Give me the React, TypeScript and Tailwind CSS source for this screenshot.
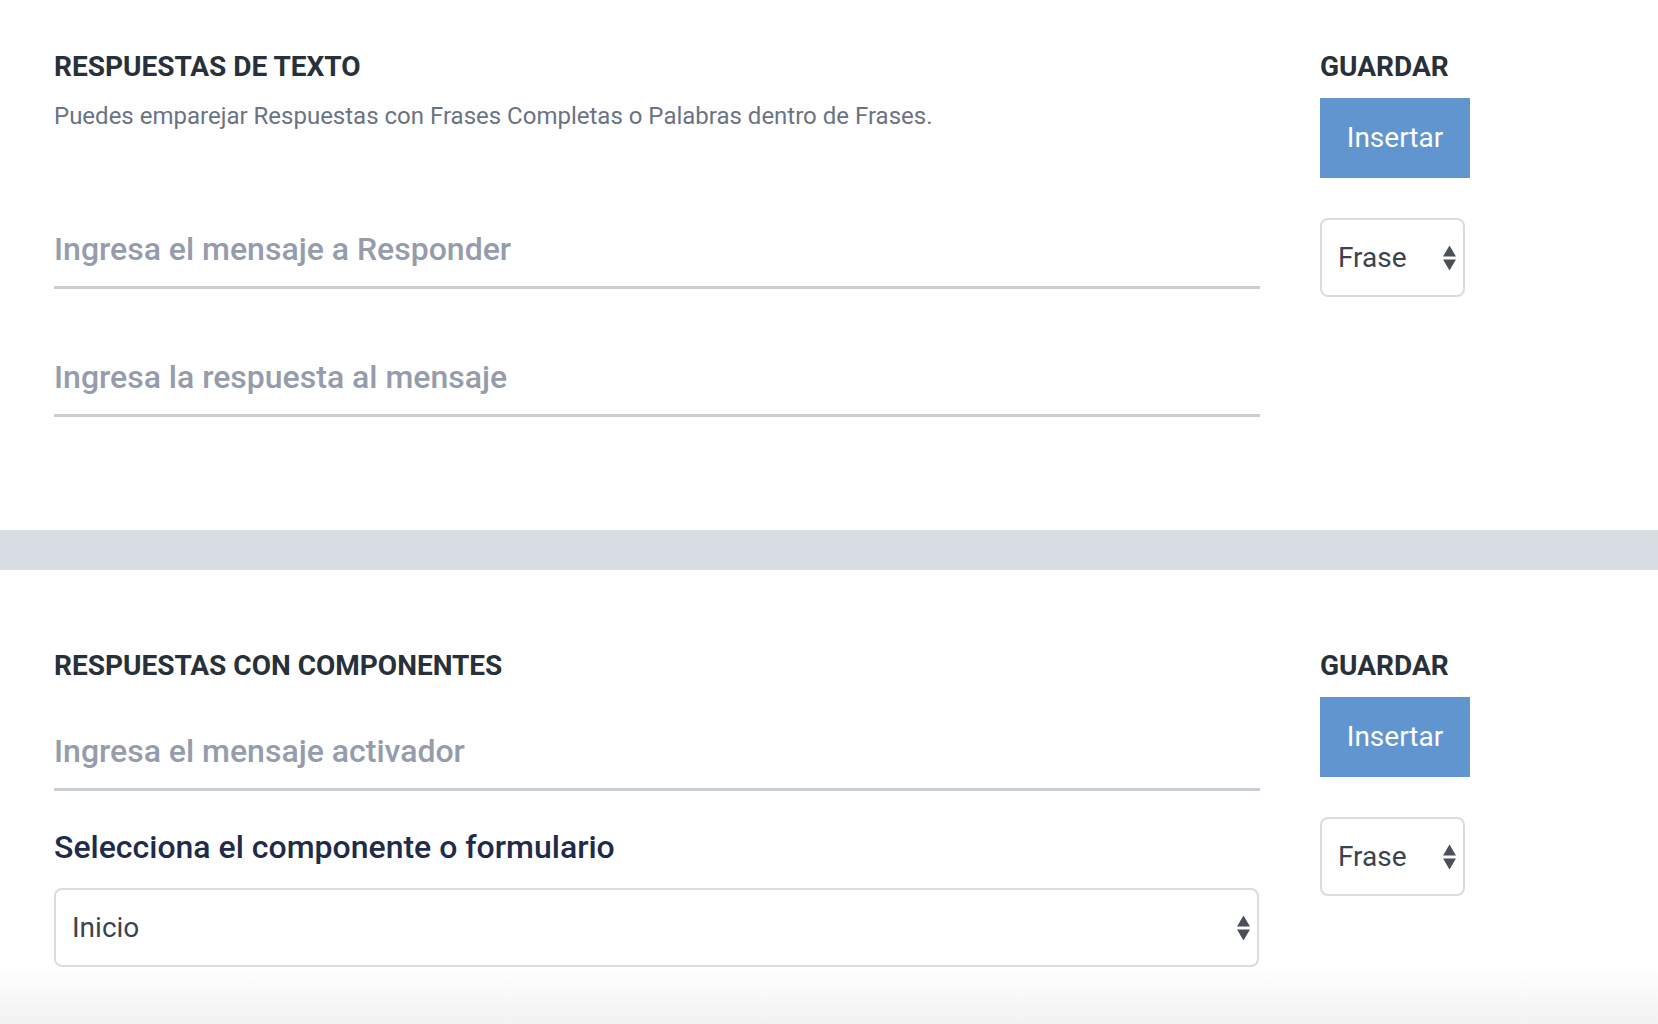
import React from "react";

function Arrows() {
  return (
    <svg
      className="pointer-events-none absolute right-[9px] top-1/2 -translate-y-1/2"
      width="13"
      height="25"
      viewBox="0 0 13 25"
    >
      <polygon points="6.5,0 13,11 0,11" fill="#4a4f58" />
      <polygon points="0,14 13,14 6.5,25" fill="#4a4f58" />
    </svg>
  );
}

function Select({ value, className }: { value: string; className: string }) {
  return (
    <div className={"relative " + className}>
      <select
        defaultValue={value}
        className="h-full w-full appearance-none rounded-[8px] border-2 border-[#dcdcdc] bg-white pl-[16px] pr-[30px] text-[28px] text-[#3c4350] outline-none"
      >
        <option>{value}</option>
      </select>
      <Arrows />
    </div>
  );
}

function UnderlineInput({ placeholder, className = "" }: { placeholder: string; className?: string }) {
  return (
    <input
      placeholder={placeholder}
      className={
        "block h-[78px] w-full border-b-[3px] border-[#c9cdd4] bg-transparent p-0 text-[32px] font-medium text-[#3c4350] outline-none placeholder:text-[#959cab] " +
        className
      }
    />
  );
}

function RightColumn() {
  return (
    <div className="flex w-[150px] flex-col">
      <h3 className="text-[28px] leading-[28px] font-bold text-[#283039]">GUARDAR</h3>
      <button className="mt-[17px] h-[80px] w-[150px] bg-[#6095d0] text-[28px] text-white">
        Insertar
      </button>
      <Select value="Frase" className="mt-[40px] h-[79px] w-[145px]" />
    </div>
  );
}

export default function App() {
  return (
    <div className="min-h-[1024px] bg-white font-['Roboto',sans-serif]">
      <section className="flex gap-[60px] pl-[54px] pt-[53px] pb-[113px]">
        <div className="flex w-[1206px] flex-col">
          <h2 className="text-[28px] leading-[28px] font-bold text-[#283039]">
            RESPUESTAS DE TEXTO
          </h2>
          <p className="mt-[21px] text-[24px] leading-[28px] text-[#6b7382]">
            Puedes emparejar Respuestas con Frases Completas o Palabras dentro de Frases.
          </p>
          <UnderlineInput placeholder="Ingresa el mensaje a Responder" className="mt-[81px]" />
          <UnderlineInput placeholder="Ingresa la respuesta al mensaje" className="mt-[50px]" />
        </div>
        <RightColumn />
      </section>

      <div className="h-[40px] bg-[#d8dce3]" />

      <section className="flex gap-[60px] pl-[54px] pt-[82px]">
        <div className="flex w-[1206px] flex-col">
          <h2 className="text-[28px] leading-[28px] font-bold text-[#283039]">
            RESPUESTAS CON COMPONENTES
          </h2>
          <UnderlineInput placeholder="Ingresa el mensaje activador" className="mt-[33px]" />
          <label className="mt-[40px] text-[32px] leading-[32px] font-medium text-[#1f2b4a]">
            Selecciona el componente o formulario
          </label>
          <Select value="Inicio" className="mt-[25px] h-[79px] w-[1205px]" />
        </div>
        <RightColumn />
      </section>

      <div className="h-[57px] bg-linear-to-b from-white to-[#f2f2f2]" />
    </div>
  );
}
